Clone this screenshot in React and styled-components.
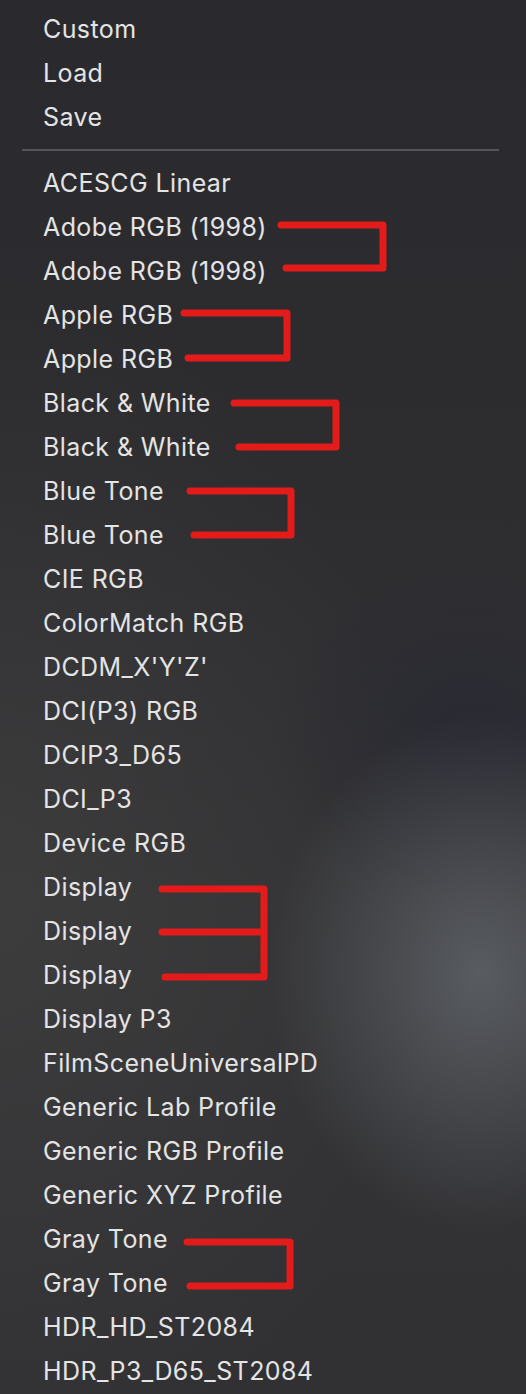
import React from "react"
import styled, { createGlobalStyle } from "styled-components"

const GlobalStyle = createGlobalStyle`
  html, body {
    margin: 0;
    padding: 0;
    background: #2c2c30;
  }
  * { box-sizing: border-box; }
`

const Menu = styled.div`
  position: relative;
  width: 526px;
  height: 1394px;
  overflow: hidden;
  padding-top: 7px;
  font-family: Inter, "Noto Sans", sans-serif;
  background:
    radial-gradient(ellipse 210px 260px at 480px 975px, rgba(98, 102, 108, 0.8), rgba(98, 102, 108, 0) 100%),
    radial-gradient(ellipse 200px 180px at 470px 740px, rgba(38, 39, 50, 0.7), rgba(38, 39, 50, 0) 100%),
    radial-gradient(ellipse 420px 600px at 0px 900px, rgba(68, 68, 68, 0.55), rgba(68, 68, 68, 0) 100%),
    linear-gradient(180deg, #2a2a2e 0%, #2d2d30 35%, #333335 65%, #313134 100%);
`

const Item = styled.div`
  height: 44px;
  display: flex;
  align-items: center;
  padding-left: 43px;
  font-size: 25px;
  font-weight: 400;
  letter-spacing: 0.4px;
  color: #e4e4e4;
  white-space: nowrap;
`

const Separator = styled.div`
  height: 22px;
  display: flex;
  align-items: center;
  padding: 0 27px 0 22px;
  &::after {
    content: "";
    flex: 1;
    height: 2px;
    background: rgba(120, 120, 124, 0.55);
  }
`

const Marks = styled.svg`
  position: absolute;
  left: 0;
  top: 0;
  pointer-events: none;
`

const top = ["Custom", "Load", "Save"]
const profiles = [
  "ACESCG Linear",
  "Adobe RGB (1998)",
  "Adobe RGB (1998)",
  "Apple RGB",
  "Apple RGB",
  "Black & White",
  "Black & White",
  "Blue Tone",
  "Blue Tone",
  "CIE RGB",
  "ColorMatch RGB",
  "DCDM_X'Y'Z'",
  "DCI(P3) RGB",
  "DCIP3_D65",
  "DCI_P3",
  "Device RGB",
  "Display",
  "Display",
  "Display",
  "Display P3",
  "FilmSceneUniversalPD",
  "Generic Lab Profile",
  "Generic RGB Profile",
  "Generic XYZ Profile",
  "Gray Tone",
  "Gray Tone",
  "HDR_HD_ST2084",
  "HDR_P3_D65_ST2084"
]

// red brackets drawn over the duplicate entries
const brackets = [
  "M281 225 H383 V268 H286",
  "M184 313 H287 V358 H188",
  "M234 403 H336 V447 H239",
  "M190 491 H291 V535 H194",
  "M162 889 H264 V977 H165 M162 932 H264",
  "M187 1242 H290 V1286 H190"
]

export default function App() {
  return (
    <>
      <GlobalStyle />
      <Menu>
        {top.map(t => (
          <Item key={t}>{t}</Item>
        ))}
        <Separator />
        {profiles.map((p, i) => (
          <Item key={i}>{p}</Item>
        ))}
        <Marks width="526" height="1394" viewBox="0 0 526 1394">
          {brackets.map((d, i) => (
            <path
              key={i}
              d={d}
              fill="none"
              stroke="#e31b1b"
              strokeWidth="7"
              strokeLinecap="round"
              strokeLinejoin="round"
            />
          ))}
        </Marks>
      </Menu>
    </>
  )
}
